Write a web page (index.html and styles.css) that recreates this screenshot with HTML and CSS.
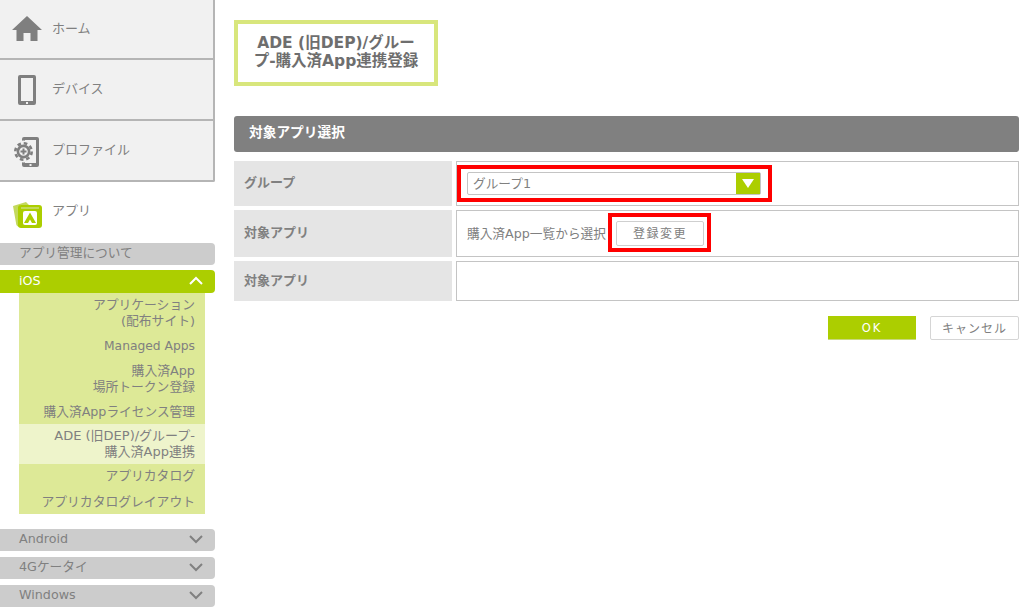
FILE: index.html
```html
<!DOCTYPE html>
<html lang="ja">
<head>
<meta charset="utf-8">
<title>ADE (旧DEP)/グループ-購入済App連携登録</title>
<link rel="stylesheet" href="styles.css">
</head>
<body>
<div class="page">
  <nav class="side">
    <div class="tabs">
      <a class="tab tab-home">
        <svg class="tab-icon" width="32" height="32" viewBox="0 0 32 32"><path fill="#7f7f7f" d="M16 3 1 17h4.500v11h7v-8h7v8h7V17H31z"/></svg>
        <span class="tab-text">ホーム</span>
      </a>
      <a class="tab">
        <svg class="tab-icon" width="32" height="32" viewBox="0 0 32 32"><path fill="#7f7f7f" fill-rule="evenodd" d="M9 1h14a2 2 0 0 1 2 2v26a2 2 0 0 1-2 2H9a2 2 0 0 1-2-2V3a2 2 0 0 1 2-2zm1 3v23h12V4zm5 24v2h2v-2z"/></svg>
        <span class="tab-text">デバイス</span>
      </a>
      <a class="tab">
        <svg class="tab-icon" width="32" height="32" viewBox="0 0 32 32">
          <path fill="#7f7f7f" fill-rule="evenodd" d="M13 2h13a2 2 0 0 1 2 2v26a2 2 0 0 1-2 2H13a2 2 0 0 1-2-2V4a2 2 0 0 1 2-2zm1 3v23h11V5zm4.500 24v2h2v-2z"/>
          <circle cx="12.500" cy="16.500" r="11" fill="#f1f1f1"/>
          <circle cx="12.500" cy="16.500" r="8.200" fill="none" stroke="#7f7f7f" stroke-width="2.600" stroke-dasharray="3.600 2.840"/>
          <circle cx="12.500" cy="16.500" r="5.600" fill="none" stroke="#7f7f7f" stroke-width="2.600"/>
          <path fill="#7f7f7f" d="M11.500 13.500h2v2h2v2h-2v2h-2v-2h-2v-2h2z"/>
        </svg>
        <span class="tab-text">プロファイル</span>
      </a>
    </div>
    <div class="apps">
      <svg class="tab-icon" width="32" height="32" viewBox="0 0 32 32">
        <path fill="#c3d95c" d="M2 9l13-4 3 3H9l-1 22c-2-1-3-2-3-4z"/>
        <rect x="7" y="8" width="24" height="23" rx="3" fill="#acce00"/>
        <path fill="#c3d95c" d="M10 10h18v2H10z"/>
        <rect x="12" y="14" width="14" height="14" rx="2" fill="#fff"/>
        <path fill="#acce00" d="M19 15.500 25 26h-4l-2-3.600L17 26h-4z"/>
      </svg>
      <span class="apps-text">アプリ</span>
    </div>
    <a class="group group-about">アプリ管理について</a>
    <a class="group group-ios">
      <span>iOS</span>
      <svg class="chev" width="16" height="9" viewBox="0 0 16 9"><path d="M2 8l6-6 6 6" fill="none" stroke="#fff" stroke-width="2"/></svg>
    </a>
    <ul class="sub">
      <li class="two first">アプリケーション<br>(配布サイト)</li>
      <li class="one managed">Managed Apps</li>
      <li class="two">購入済App<br>場所トークン登録</li>
      <li class="one license">購入済Appライセンス管理</li>
      <li class="cur">ADE (旧DEP)/グループ-<br>購入済App連携</li>
      <li class="one catalog">アプリカタログ</li>
      <li class="one">アプリカタログレイアウト</li>
    </ul>
    <a class="group group-and">
      <span>Android</span>
      <svg class="chev" width="16" height="9" viewBox="0 0 16 9"><path d="M2 1l6 6 6-6" fill="none" stroke="#808080" stroke-width="2"/></svg>
    </a>
    <a class="group group-next">
      <span>4Gケータイ</span>
      <svg class="chev" width="16" height="9" viewBox="0 0 16 9"><path d="M2 1l6 6 6-6" fill="none" stroke="#808080" stroke-width="2"/></svg>
    </a>
    <a class="group group-next">
      <span>Windows</span>
      <svg class="chev" width="16" height="9" viewBox="0 0 16 9"><path d="M2 1l6 6 6-6" fill="none" stroke="#808080" stroke-width="2"/></svg>
    </a>
  </nav>
  <main class="main">
    <h1 class="title">ADE (旧DEP)/グループ-購入済App連携登録</h1>
    <h2 class="bar">対象アプリ選択</h2>
    <div class="form">
      <div class="label row-a">グループ</div>
      <div class="value row-a">
        <div class="select">
          <span class="select-text">グループ1</span>
          <span class="select-arrow"><svg width="12" height="9" viewBox="0 0 12 9"><path fill="#fff" d="M0 0h12L6 9z"/></svg></span>
        </div>
        <span class="mark mark-select"></span>
      </div>
      <div class="label row-b">対象アプリ</div>
      <div class="value row-b">
        <span class="hint">購入済App一覧から選択</span>
        <button class="btn-change" type="button">登録変更</button>
        <span class="mark mark-button"></span>
      </div>
      <div class="label row-c">対象アプリ</div>
      <div class="value row-c"></div>
    </div>
    <div class="actions">
      <button class="btn-ok" type="button">OK</button>
      <button class="btn-cancel" type="button">キャンセル</button>
    </div>
  </main>
</div>
</body>
</html>
```
FILE: styles.css
```css
* { box-sizing: border-box; }
html, body { margin: 0; height: 100%; overflow: hidden; background: #fff; }
body {
  font-family: "DejaVu Sans", "Noto Sans CJK JP", sans-serif;
  font-size: 13px;
  color: #808080;
}
.page { display: flex; align-items: flex-start; width: 1024px; height: 613px; }

/* sidebar */
.side { width: 215px; flex: none; }
.tabs { background: #f1f1f1; border-right: 2px solid #b5b5b5; border-bottom: 2px solid #b5b5b5; border-bottom-right-radius: 2px; }
.tab {
  display: flex; align-items: center; gap: 9px;
  height: 61px; padding-left: 11px;
  border-bottom: 2px solid #b5b5b5;
  font-size: 13px; color: #808080;
}
.tab-home { height: 60px; }
.tab:last-child { border-bottom: 0; height: 59px; }
.tab-text { padding-bottom: 4px; }
.tab-icon { flex: none; }
.apps { display: flex; align-items: center; gap: 9px; height: 61px; padding-left: 11px; font-size: 13px; }
.apps-text { padding-bottom: 6px; }
.group {
  display: flex; align-items: center; justify-content: space-between;
  height: 22px; padding: 0 11px 2px 19px;
  background: #cccccc; border-radius: 0 4px 4px 0;
  font-size: 12.700px; line-height: 20px; color: #808080;
}
.group-ios { height: 23px; margin-top: 5px; background: #acce00; color: #fff; }
.group-and { margin-top: 15px; }
.group-next { margin-top: 6px; }
.sub {
  list-style: none; margin: 0 10px 0 19px; padding: 0;
  background: #dde997; text-align: right; font-size: 12.800px; line-height: 16px;
}
.sub li { padding: 0 10px 0 0; }
.sub .two { padding-top: 5px; height: 41px; }
.sub .one { height: 25px; padding-top: 5px; }
.sub .first { height: 40px; padding-top: 4px; }
.sub .managed { padding-top: 5px; font-size: 12.300px; }
.sub .license { font-size: 12.700px; }
.sub .catalog { padding-top: 4px; }
.sub .cur { background: #eef4cb; height: 40px; padding-top: 4px; font-size: 13px; }

/* main */
.main { width: 785px; margin-left: 19px; padding-top: 20px; }
.title {
  width: 204px; height: 66px; margin: 0 0 30px;
  display: flex; align-items: center; justify-content: center;
  border: 4px solid #d8e67c; padding: 0 12px 2px;
  font-size: 15.500px; line-height: 18px; font-weight: 700; color: #6e6e6e; text-align: center;
}
.bar {
  height: 36px; margin: 0 0 9px; padding: 0 15px 6px;
  display: flex; align-items: center;
  background: #808080; border-radius: 3px;
  font-size: 13.700px; font-weight: 700; color: #fff;
}
.form { display: grid; grid-template-columns: 218px 1fr; column-gap: 4px; row-gap: 4px; }
.row-a { height: 45px; }
.row-b { height: 47px; }
.row-c { height: 40px; }
.label {
  display: flex; align-items: center; padding: 0 0 4px 10px;
  background: #e5e5e5; font-size: 13px; font-weight: 700; color: #808080;
}
.value {
  position: relative; display: flex; align-items: center; padding-left: 10px;
  border: 1.500px solid #c4c4c4;
}
.select {
  display: flex; width: 294px; height: 23px;
  border: 1px solid #c4c4c4; border-radius: 2px; background: #fff;
}
.select-text { flex: 1; padding-left: 5px; line-height: 21px; font-size: 12.700px; }
.select-arrow { display: flex; align-items: center; justify-content: center; width: 24px; background: #acce00; }
.hint { font-size: 12.700px; padding-bottom: 2px; }
.btn-change {
  width: 88px; height: 25px; margin-left: 10px; padding: 0 0 2px;
  border: 1px solid #cfcfcf; border-radius: 2px; background: #fff;
  font: inherit; font-size: 12px; letter-spacing: 1.500px; color: #808080;
}
.mark { position: absolute; border: 4px solid #f00; pointer-events: none; }
.mark-select { left: 0; top: 3px; width: 315px; height: 37px; }
.mark-button { left: 151px; top: 2px; width: 103px; height: 39px; }
.actions { display: flex; justify-content: flex-end; gap: 14px; margin-top: 15px; }
.btn-ok {
  width: 88px; height: 24px; padding: 0;
  border: 0; border-bottom: 1px solid #c9d87d; background: #acce00;
  font: inherit; font-size: 11.500px; font-weight: 400; letter-spacing: 2px; color: #fff;
}
.btn-cancel {
  width: 89px; height: 24px; padding: 0 0 2px;
  border: 1px solid #d5d5d5; border-radius: 2px; background: #fff;
  font: inherit; font-size: 12px; letter-spacing: 1px; color: #808080;
}
```
